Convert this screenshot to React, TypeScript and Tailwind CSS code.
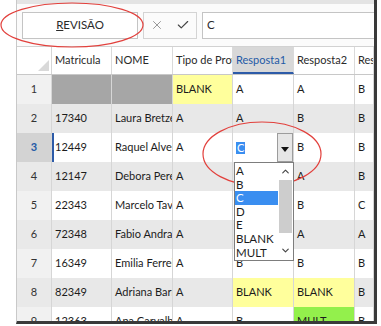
import { X, Check, ChevronUp, ChevronDown } from 'lucide-react';

const COLS = [
  { label: 'Matricula', w: 'w-[60px]' },
  { label: 'NOME', w: 'w-[61px]' },
  { label: 'Tipo de Prova', w: 'w-[60px]' },
  { label: 'Resposta1', w: 'w-[61px]' },
  { label: 'Resposta2', w: 'w-[61px]' },
  { label: 'Resposta3', w: 'flex-1' },
];

const ROWS: string[][] = [
  ['', '', 'BLANK', 'A', 'A', 'B'],
  ['17340', 'Laura Bretzel', 'A', 'A', 'B', 'B'],
  ['12449', 'Raquel Alves', 'A', 'C', 'B', 'B'],
  ['12147', 'Debora Pereira', 'A', 'A', 'A', 'B'],
  ['22343', 'Marcelo Tavares', 'A', 'B', 'B', 'C'],
  ['72348', 'Fabio Andrade', 'A', 'A', 'A', 'A'],
  ['16349', 'Emilia Ferreira', 'A', 'B', 'B', 'B'],
  ['82349', 'Adriana Barros', 'A', 'BLANK', 'BLANK', 'B'],
  ['12363', 'Ana Carvalho', 'A', 'B', 'MULT', 'B'],
];

const OPTIONS = ['A', 'B', 'C', 'D', 'E', 'BLANK', 'MULT'];

function cellTone(row: number, col: number, value: string) {
  if (row === 0 && col < 2) return 'bg-[#a6a6a6]';
  if (value === 'BLANK') return 'bg-[#ffff9c]';
  if (value === 'MULT') return 'bg-[#93f04c]';
  return '';
}

function EditCell() {
  return (
    <div className="relative w-[61px] shrink-0 h-full bg-white border-r border-[#d6d6d6] flex items-center">
      <span className="ml-[3px] px-[1px] leading-[12px] bg-[#3a8ef0] text-white">C</span>
      <div className="ml-auto h-full w-[16px] border border-[#9c9c9c] bg-[#e6e6e6] flex items-center justify-center">
        <svg width="8" height="5" viewBox="0 0 8 5" className="mt-[3px]">
          <path d="M0 0 H8 L4 5 Z" fill="#111" />
        </svg>
      </div>

      {/* dropdown list */}
      <div className="absolute left-[1px] top-full z-10 w-[60px] h-[99px] bg-white border border-[#7d7d7d] flex text-[11.5px]">
        <div className="flex-1 flex flex-col pt-[1px]">
          {OPTIONS.map(o => (
            <div
              key={o}
              className={`h-[13.6px] leading-[13.6px] pl-[1px] ${o === 'C' ? 'bg-[#3a8ef0] text-white' : ''}`}
            >
              {o}
            </div>
          ))}
        </div>
        <div className="w-[15px] flex flex-col items-center">
          <ChevronUp className="w-[11px] h-[11px] mt-[3px] text-[#444]" strokeWidth={2.5} />
          <div className="w-[13px] h-[53px] mt-[3px] bg-[#cdcdcd]" />
          <ChevronDown className="w-[11px] h-[11px] mt-auto mb-[4px] text-[#444]" strokeWidth={2.5} />
        </div>
      </div>
    </div>
  );
}

function Row({ idx, cells }: { idx: number; cells: string[] }) {
  const active = idx === 2;
  const even = idx % 2 === 1;
  return (
    <div className={`flex h-[29px] shrink-0 ${even ? 'bg-[#e8e8e8]' : 'bg-white'}`}>
      <div
        className={`w-[35px] shrink-0 flex items-center justify-center border-r border-[#d6d6d6] ${
          active ? 'bg-[#d3d3d3] text-[#1f5aa6] font-bold' : even ? 'bg-[#e9e9e9] text-[#333]' : 'bg-[#f1f1f1] text-[#333]'
        }`}
      >
        {idx + 1}
      </div>
      {cells.map((v, c) => {
        if (active && c === 3) return <EditCell key={c} />;
        return (
          <div
            key={c}
            className={`${COLS[c].w} shrink-0 h-full flex items-center px-[3px] overflow-hidden whitespace-nowrap border-r border-[#d6d6d6] ${cellTone(idx, c, v)} ${
              active && c === 0 ? 'border-l-2 border-l-[#2d5ba8] pl-[1px]' : ''
            }`}
          >
            {v}
          </div>
        );
      })}
    </div>
  );
}

export default function App() {
  return (
    <div className="relative w-[381px] h-[326px] bg-white overflow-hidden font-[family-name:Lato,sans-serif] text-[11px] text-[#1c1c1c]">
      <div className="ml-[16px] w-[361px] h-[324px] flex flex-col border-l border-[#c9c9c9] border-r-[3px] border-r-[#3a3a3a] border-b-[3px] border-b-[#3a3a3a] overflow-hidden">
        {/* formula bar */}
        <div className="h-[46px] shrink-0 flex items-center bg-[#fbfbfb] border-t-4 border-[#e4e4e4]">
          <div className="ml-[5px] w-[116px] h-[27px] border border-[#c4c4c4] bg-white flex items-center justify-center text-[11.5px] text-[#2a2a2a]">
            <span className="underline">R</span>EVISÃO
          </div>
          <div className="ml-[5px] w-[54px] h-[27px] border border-[#d4d4d4] flex items-center">
            <X className="w-[14px] h-[14px] ml-[6px] text-[#8a8a8a]" strokeWidth={1.5} />
            <Check className="w-[14px] h-[14px] ml-[12px] text-[#444]" strokeWidth={2} />
          </div>
          <div className="ml-[5px] flex-1 h-[27px] border border-[#c4c4c4] border-r-0 bg-white flex items-center pl-[4px] text-[11.5px] text-[#2a2a2a]">
            C
          </div>
        </div>

        {/* header */}
        <div className="flex h-[29px] shrink-0 bg-white border-t border-[#d2d2d2] border-b border-b-[#c8c8c8]">
          <div className="w-[35px] shrink-0 flex items-end justify-end border-r border-[#d6d6d6] pb-[3px] pr-[2px]">
            <svg width="11" height="11" viewBox="0 0 11 11">
              <path d="M11 0 V11 H0 Z" fill="#d9d9d9" />
            </svg>
          </div>
          {COLS.map((col, c) => (
            <div
              key={col.label}
              className={`${col.w} shrink-0 h-full flex items-center px-[3px] overflow-hidden whitespace-nowrap border-r border-[#dadada] ${
                c === 3 ? 'bg-[#d8d8d8] text-[#1f5aa6] border-b-2 border-b-[#2d5ba8] pt-[2px]' : 'text-[#2a2a2a]'
              }`}
            >
              {col.label}
            </div>
          ))}
        </div>

        {ROWS.map((r, i) => (
          <Row key={i} idx={i} cells={r} />
        ))}
      </div>

      {/* red annotation ellipses */}
      <svg className="absolute inset-0 pointer-events-none" width="381" height="326">
        <ellipse cx="72" cy="25" rx="71" ry="22" fill="none" stroke="#e2403c" strokeWidth="1.2" />
        <ellipse cx="262" cy="154" rx="59" ry="32" fill="none" stroke="#e2403c" strokeWidth="1.2" />
      </svg>
    </div>
  );
}
